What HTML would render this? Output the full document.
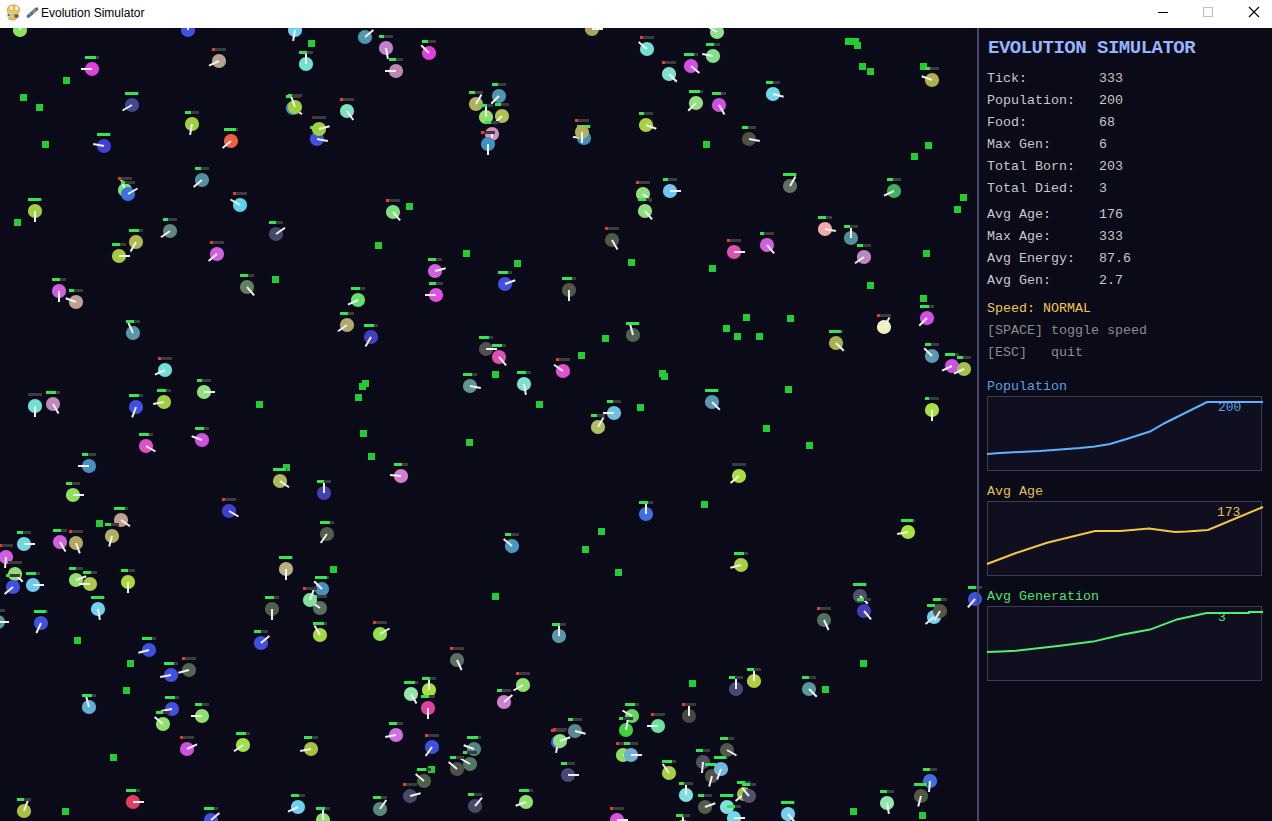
<!DOCTYPE html>
<html><head><meta charset="utf-8">
<style>
html,body{margin:0;padding:0;width:1272px;height:821px;overflow:hidden;background:#0a0a18;}
#tb{position:absolute;left:0;top:0;width:1272px;height:28px;background:#fff;}
#tb .t{position:absolute;left:41px;top:6px;font:12px "Liberation Sans",sans-serif;color:#000;}
#cv{position:absolute;left:0;top:0;}
.p{position:absolute;font-family:"Liberation Mono",monospace;white-space:pre;}
</style></head><body>
<svg id="cv" width="1272" height="821" shape-rendering="crispEdges">
<rect x="0" y="0" width="1272" height="821" fill="#0a0a18"/>
<rect x="63" y="77" width="7" height="7" fill="#22cc33"/><rect x="20" y="94" width="7" height="7" fill="#22cc33"/><rect x="36" y="104" width="7" height="7" fill="#22cc33"/><rect x="42" y="141" width="7" height="7" fill="#22cc33"/><rect x="14" y="219" width="7" height="7" fill="#22cc33"/><rect x="308" y="40" width="7" height="7" fill="#22cc33"/><rect x="406" y="203" width="7" height="7" fill="#22cc33"/><rect x="703" y="141" width="7" height="7" fill="#22cc33"/><rect x="845" y="38" width="7" height="7" fill="#22cc33"/><rect x="852" y="38" width="7" height="7" fill="#22cc33"/><rect x="854" y="42" width="7" height="7" fill="#22cc33"/><rect x="859" y="63" width="7" height="7" fill="#22cc33"/><rect x="867" y="68" width="7" height="7" fill="#22cc33"/><rect x="920" y="63" width="7" height="7" fill="#22cc33"/><rect x="925" y="142" width="7" height="7" fill="#22cc33"/><rect x="911" y="153" width="7" height="7" fill="#22cc33"/><rect x="960" y="194" width="7" height="7" fill="#22cc33"/><rect x="954" y="206" width="7" height="7" fill="#22cc33"/><rect x="375" y="242" width="7" height="7" fill="#22cc33"/><rect x="463" y="250" width="7" height="7" fill="#22cc33"/><rect x="272" y="276" width="7" height="7" fill="#22cc33"/><rect x="362" y="380" width="7" height="7" fill="#22cc33"/><rect x="359" y="383" width="7" height="7" fill="#22cc33"/><rect x="355" y="394" width="7" height="7" fill="#22cc33"/><rect x="256" y="401" width="7" height="7" fill="#22cc33"/><rect x="514" y="260" width="7" height="7" fill="#22cc33"/><rect x="628" y="259" width="7" height="7" fill="#22cc33"/><rect x="709" y="265" width="7" height="7" fill="#22cc33"/><rect x="602" y="335" width="7" height="7" fill="#22cc33"/><rect x="723" y="325" width="7" height="7" fill="#22cc33"/><rect x="578" y="352" width="7" height="7" fill="#22cc33"/><rect x="492" y="371" width="7" height="7" fill="#22cc33"/><rect x="659" y="370" width="7" height="7" fill="#22cc33"/><rect x="661" y="373" width="7" height="7" fill="#22cc33"/><rect x="536" y="401" width="7" height="7" fill="#22cc33"/><rect x="637" y="404" width="7" height="7" fill="#22cc33"/><rect x="923" y="250" width="7" height="7" fill="#22cc33"/><rect x="867" y="282" width="7" height="7" fill="#22cc33"/><rect x="920" y="295" width="7" height="7" fill="#22cc33"/><rect x="743" y="314" width="7" height="7" fill="#22cc33"/><rect x="787" y="315" width="7" height="7" fill="#22cc33"/><rect x="734" y="333" width="7" height="7" fill="#22cc33"/><rect x="756" y="333" width="7" height="7" fill="#22cc33"/><rect x="785" y="386" width="7" height="7" fill="#22cc33"/><rect x="763" y="425" width="7" height="7" fill="#22cc33"/><rect x="96" y="520" width="7" height="7" fill="#22cc33"/><rect x="360" y="430" width="7" height="7" fill="#22cc33"/><rect x="466" y="439" width="7" height="7" fill="#22cc33"/><rect x="368" y="453" width="7" height="7" fill="#22cc33"/><rect x="283" y="464" width="7" height="7" fill="#22cc33"/><rect x="330" y="566" width="7" height="7" fill="#22cc33"/><rect x="701" y="501" width="7" height="7" fill="#22cc33"/><rect x="598" y="528" width="7" height="7" fill="#22cc33"/><rect x="582" y="546" width="7" height="7" fill="#22cc33"/><rect x="615" y="569" width="7" height="7" fill="#22cc33"/><rect x="492" y="593" width="7" height="7" fill="#22cc33"/><rect x="806" y="442" width="7" height="7" fill="#22cc33"/><rect x="74" y="637" width="7" height="7" fill="#22cc33"/><rect x="127" y="660" width="7" height="7" fill="#22cc33"/><rect x="123" y="687" width="7" height="7" fill="#22cc33"/><rect x="110" y="754" width="7" height="7" fill="#22cc33"/><rect x="62" y="808" width="7" height="7" fill="#22cc33"/><rect x="428" y="766" width="7" height="7" fill="#22cc33"/><rect x="689" y="680" width="7" height="7" fill="#22cc33"/><rect x="822" y="686" width="7" height="7" fill="#22cc33"/><rect x="860" y="660" width="7" height="7" fill="#22cc33"/><rect x="850" y="808" width="7" height="7" fill="#22cc33"/><rect x="919" y="812" width="7" height="7" fill="#22cc33"/>
<g shape-rendering="auto">
<circle cx="20" cy="30" r="7.1" fill="#90e060"/><line x1="20" y1="30" x2="20.0" y2="19.0" stroke="#f0f0f0" stroke-width="2"/><rect x="13" y="17" width="14" height="3" fill="#3c3c3c"/><rect x="13" y="17" width="13" height="3" fill="#32e650"/>
<circle cx="188" cy="30" r="7.1" fill="#4050e0"/><line x1="188" y1="30" x2="188.0" y2="19.0" stroke="#f0f0f0" stroke-width="2"/><rect x="181" y="17" width="14" height="3" fill="#3c3c3c"/><rect x="181" y="17" width="13" height="3" fill="#32e650"/>
<circle cx="219" cy="61" r="7.1" fill="#b8a090"/><line x1="219" y1="61" x2="209.0" y2="65.6" stroke="#f0f0f0" stroke-width="2"/><rect x="212" y="48" width="14" height="3" fill="#3c3c3c"/><rect x="212" y="48" width="3" height="3" fill="#e63c28"/>
<circle cx="92" cy="69" r="7.1" fill="#e040e0"/><line x1="92" y1="69" x2="81.0" y2="69.0" stroke="#f0f0f0" stroke-width="2"/><rect x="85" y="56" width="14" height="3" fill="#3c3c3c"/><rect x="85" y="56" width="11" height="3" fill="#32e650"/>
<circle cx="132" cy="105" r="7.1" fill="#404890"/><line x1="132" y1="105" x2="122.5" y2="110.5" stroke="#f0f0f0" stroke-width="2"/><rect x="125" y="92" width="14" height="3" fill="#3c3c3c"/><rect x="125" y="92" width="13" height="3" fill="#32e650"/>
<circle cx="192" cy="124" r="7.1" fill="#a0d040"/><line x1="192" y1="124" x2="190.1" y2="134.8" stroke="#f0f0f0" stroke-width="2"/><rect x="185" y="111" width="14" height="3" fill="#3c3c3c"/><rect x="185" y="111" width="6" height="3" fill="#32e650"/>
<circle cx="231" cy="141" r="7.1" fill="#f06040"/><line x1="231" y1="141" x2="222.6" y2="148.1" stroke="#f0f0f0" stroke-width="2"/><rect x="224" y="128" width="14" height="3" fill="#3c3c3c"/><rect x="224" y="128" width="12" height="3" fill="#32e650"/>
<circle cx="104" cy="146" r="7.1" fill="#4040d0"/><line x1="104" y1="146" x2="93.2" y2="144.1" stroke="#f0f0f0" stroke-width="2"/><rect x="97" y="133" width="14" height="3" fill="#3c3c3c"/><rect x="97" y="133" width="13" height="3" fill="#32e650"/>
<circle cx="202" cy="180" r="7.1" fill="#5090a0"/><line x1="202" y1="180" x2="193.6" y2="187.1" stroke="#f0f0f0" stroke-width="2"/><rect x="195" y="167" width="14" height="3" fill="#3c3c3c"/><rect x="195" y="167" width="6" height="3" fill="#32e650"/>
<circle cx="125" cy="190" r="7.1" fill="#80e070"/><line x1="125" y1="190" x2="121.2" y2="179.7" stroke="#f0f0f0" stroke-width="2"/><rect x="118" y="177" width="14" height="3" fill="#3c3c3c"/><rect x="118" y="177" width="3" height="3" fill="#e63c28"/>
<circle cx="128" cy="194" r="7.1" fill="#4070e0"/><line x1="128" y1="194" x2="137.5" y2="188.5" stroke="#f0f0f0" stroke-width="2"/><rect x="121" y="181" width="14" height="3" fill="#3c3c3c"/><rect x="121" y="181" width="4" height="3" fill="#32e650"/>
<circle cx="240" cy="205" r="7.1" fill="#60d0f0"/><line x1="240" y1="205" x2="230.5" y2="199.5" stroke="#f0f0f0" stroke-width="2"/><rect x="233" y="192" width="14" height="3" fill="#3c3c3c"/><rect x="233" y="192" width="3" height="3" fill="#e63c28"/>
<circle cx="35" cy="211" r="7.1" fill="#a0d040"/><line x1="35" y1="211" x2="35.0" y2="222.0" stroke="#f0f0f0" stroke-width="2"/><rect x="28" y="198" width="14" height="3" fill="#3c3c3c"/><rect x="28" y="198" width="13" height="3" fill="#32e650"/>
<circle cx="170" cy="231" r="7.1" fill="#608880"/><line x1="170" y1="231" x2="161.0" y2="237.3" stroke="#f0f0f0" stroke-width="2"/><rect x="163" y="218" width="14" height="3" fill="#3c3c3c"/><rect x="163" y="218" width="5" height="3" fill="#32e650"/>
<circle cx="295" cy="30" r="7.1" fill="#70d0f0"/><line x1="295" y1="30" x2="293.1" y2="40.8" stroke="#f0f0f0" stroke-width="2"/><rect x="288" y="17" width="14" height="3" fill="#3c3c3c"/><rect x="288" y="17" width="13" height="3" fill="#32e650"/>
<circle cx="306" cy="64" r="7.1" fill="#70e0d0"/><line x1="306" y1="64" x2="306.0" y2="53.0" stroke="#f0f0f0" stroke-width="2"/><rect x="299" y="51" width="14" height="3" fill="#3c3c3c"/><rect x="299" y="51" width="8" height="3" fill="#32e650"/>
<circle cx="365" cy="37" r="7.1" fill="#5098b0"/><line x1="365" y1="37" x2="373.4" y2="29.9" stroke="#f0f0f0" stroke-width="2"/><rect x="358" y="24" width="14" height="3" fill="#3c3c3c"/><rect x="358" y="24" width="7" height="3" fill="#32e650"/>
<circle cx="386" cy="48" r="7.1" fill="#c080d0"/><line x1="386" y1="48" x2="387.9" y2="58.8" stroke="#f0f0f0" stroke-width="2"/><rect x="379" y="35" width="14" height="3" fill="#3c3c3c"/><rect x="379" y="35" width="5" height="3" fill="#32e650"/>
<circle cx="429" cy="53" r="7.1" fill="#e040e0"/><line x1="429" y1="53" x2="421.2" y2="45.2" stroke="#f0f0f0" stroke-width="2"/><rect x="422" y="40" width="14" height="3" fill="#3c3c3c"/><rect x="422" y="40" width="6" height="3" fill="#32e650"/>
<circle cx="396" cy="71" r="7.1" fill="#c088b0"/><line x1="396" y1="71" x2="385.0" y2="71.0" stroke="#f0f0f0" stroke-width="2"/><rect x="389" y="58" width="14" height="3" fill="#3c3c3c"/><rect x="389" y="58" width="7" height="3" fill="#32e650"/>
<circle cx="293" cy="108" r="7.1" fill="#4090d0"/><line x1="293" y1="108" x2="302.0" y2="114.3" stroke="#f0f0f0" stroke-width="2"/><rect x="286" y="95" width="14" height="3" fill="#3c3c3c"/><rect x="286" y="95" width="5" height="3" fill="#32e650"/>
<circle cx="295" cy="107" r="7.1" fill="#a0d040"/><line x1="295" y1="107" x2="291.2" y2="96.7" stroke="#f0f0f0" stroke-width="2"/><rect x="288" y="94" width="14" height="3" fill="#3c3c3c"/><rect x="288" y="94" width="4" height="3" fill="#32e650"/>
<circle cx="347" cy="111" r="7.1" fill="#80e0c0"/><line x1="347" y1="111" x2="353.3" y2="120.0" stroke="#f0f0f0" stroke-width="2"/><rect x="340" y="98" width="14" height="3" fill="#3c3c3c"/><rect x="340" y="98" width="3" height="3" fill="#e63c28"/>
<circle cx="317" cy="139" r="7.1" fill="#4050e0"/><line x1="317" y1="139" x2="327.8" y2="140.9" stroke="#f0f0f0" stroke-width="2"/><rect x="310" y="126" width="14" height="3" fill="#3c3c3c"/><rect x="310" y="126" width="3" height="3" fill="#32e650"/>
<circle cx="319" cy="129" r="7.1" fill="#a0d040"/><line x1="319" y1="129" x2="329.6" y2="126.2" stroke="#f0f0f0" stroke-width="2"/><rect x="312" y="116" width="14" height="3" fill="#3c3c3c"/>
<circle cx="476" cy="104" r="7.1" fill="#b0b060"/><line x1="476" y1="104" x2="481.5" y2="94.5" stroke="#f0f0f0" stroke-width="2"/><rect x="469" y="91" width="14" height="3" fill="#3c3c3c"/><rect x="469" y="91" width="6" height="3" fill="#32e650"/>
<circle cx="393" cy="212" r="7.1" fill="#80e080"/><line x1="393" y1="212" x2="400.1" y2="220.4" stroke="#f0f0f0" stroke-width="2"/><rect x="386" y="199" width="14" height="3" fill="#3c3c3c"/><rect x="386" y="199" width="3" height="3" fill="#e63c28"/>
<circle cx="592" cy="29" r="7.1" fill="#b0a060"/><line x1="592" y1="29" x2="603.0" y2="29.0" stroke="#f0f0f0" stroke-width="2"/><rect x="585" y="16" width="14" height="3" fill="#3c3c3c"/><rect x="585" y="16" width="13" height="3" fill="#32e650"/>
<circle cx="647" cy="49" r="7.1" fill="#70e0d0"/><line x1="647" y1="49" x2="638.6" y2="41.9" stroke="#f0f0f0" stroke-width="2"/><rect x="640" y="36" width="14" height="3" fill="#3c3c3c"/><rect x="640" y="36" width="3" height="3" fill="#e63c28"/>
<circle cx="717" cy="32" r="7.1" fill="#90e090"/><line x1="717" y1="32" x2="707.5" y2="26.5" stroke="#f0f0f0" stroke-width="2"/><rect x="710" y="19" width="14" height="3" fill="#3c3c3c"/><rect x="710" y="19" width="13" height="3" fill="#32e650"/>
<circle cx="713" cy="56" r="7.1" fill="#80e090"/><line x1="713" y1="56" x2="702.2" y2="54.1" stroke="#f0f0f0" stroke-width="2"/><rect x="706" y="43" width="14" height="3" fill="#3c3c3c"/><rect x="706" y="43" width="8" height="3" fill="#32e650"/>
<circle cx="691" cy="66" r="7.1" fill="#d050e0"/><line x1="691" y1="66" x2="699.4" y2="73.1" stroke="#f0f0f0" stroke-width="2"/><rect x="684" y="53" width="14" height="3" fill="#3c3c3c"/><rect x="684" y="53" width="10" height="3" fill="#32e650"/>
<circle cx="669" cy="74" r="7.1" fill="#80e0d0"/><line x1="669" y1="74" x2="676.8" y2="81.8" stroke="#f0f0f0" stroke-width="2"/><rect x="662" y="61" width="14" height="3" fill="#3c3c3c"/><rect x="662" y="61" width="3" height="3" fill="#e63c28"/>
<circle cx="696" cy="103" r="7.1" fill="#90e080"/><line x1="696" y1="103" x2="688.2" y2="110.8" stroke="#f0f0f0" stroke-width="2"/><rect x="689" y="90" width="14" height="3" fill="#3c3c3c"/><rect x="689" y="90" width="11" height="3" fill="#32e650"/>
<circle cx="719" cy="105" r="7.1" fill="#d050e0"/><line x1="719" y1="105" x2="724.5" y2="114.5" stroke="#f0f0f0" stroke-width="2"/><rect x="712" y="92" width="14" height="3" fill="#3c3c3c"/><rect x="712" y="92" width="9" height="3" fill="#32e650"/>
<circle cx="646" cy="125" r="7.1" fill="#a8d040"/><line x1="646" y1="125" x2="656.3" y2="128.8" stroke="#f0f0f0" stroke-width="2"/><rect x="639" y="112" width="14" height="3" fill="#3c3c3c"/><rect x="639" y="112" width="5" height="3" fill="#32e650"/>
<circle cx="499" cy="96" r="7.1" fill="#5098b0"/><line x1="499" y1="96" x2="491.2" y2="103.8" stroke="#f0f0f0" stroke-width="2"/><rect x="492" y="83" width="14" height="3" fill="#3c3c3c"/><rect x="492" y="83" width="6" height="3" fill="#32e650"/>
<circle cx="486" cy="117" r="7.1" fill="#90e070"/><line x1="486" y1="117" x2="486.0" y2="106.0" stroke="#f0f0f0" stroke-width="2"/><rect x="479" y="104" width="14" height="3" fill="#3c3c3c"/><rect x="479" y="104" width="8" height="3" fill="#32e650"/>
<circle cx="502" cy="116" r="7.1" fill="#b0c050"/><line x1="502" y1="116" x2="494.2" y2="123.8" stroke="#f0f0f0" stroke-width="2"/><rect x="495" y="103" width="14" height="3" fill="#3c3c3c"/><rect x="495" y="103" width="6" height="3" fill="#32e650"/>
<circle cx="492" cy="134" r="7.1" fill="#d090c0"/><line x1="492" y1="134" x2="492.0" y2="145.0" stroke="#f0f0f0" stroke-width="2"/><rect x="485" y="121" width="14" height="3" fill="#3c3c3c"/><rect x="485" y="121" width="6" height="3" fill="#32e650"/>
<circle cx="488" cy="144" r="7.1" fill="#4090c0"/><line x1="488" y1="144" x2="488.0" y2="155.0" stroke="#f0f0f0" stroke-width="2"/><rect x="481" y="131" width="14" height="3" fill="#3c3c3c"/><rect x="481" y="131" width="3" height="3" fill="#e63c28"/>
<circle cx="584" cy="138" r="7.1" fill="#4090c0"/><line x1="584" y1="138" x2="573.0" y2="137.0" stroke="#f0f0f0" stroke-width="2"/><rect x="577" y="125" width="14" height="3" fill="#3c3c3c"/><rect x="577" y="125" width="13" height="3" fill="#32e650"/>
<circle cx="582" cy="132" r="7.1" fill="#b0b060"/><line x1="582" y1="132" x2="582.0" y2="143.0" stroke="#f0f0f0" stroke-width="2"/><rect x="575" y="119" width="14" height="3" fill="#3c3c3c"/><rect x="575" y="119" width="3" height="3" fill="#e63c28"/>
<circle cx="643" cy="194" r="7.1" fill="#90e080"/><line x1="643" y1="194" x2="651.4" y2="201.1" stroke="#f0f0f0" stroke-width="2"/><rect x="636" y="181" width="14" height="3" fill="#3c3c3c"/><rect x="636" y="181" width="3" height="3" fill="#e63c28"/>
<circle cx="670" cy="191" r="7.1" fill="#70c8f0"/><line x1="670" y1="191" x2="681.0" y2="191.0" stroke="#f0f0f0" stroke-width="2"/><rect x="663" y="178" width="14" height="3" fill="#3c3c3c"/><rect x="663" y="178" width="5" height="3" fill="#32e650"/>
<circle cx="645" cy="211" r="7.1" fill="#90e080"/><line x1="645" y1="211" x2="652.1" y2="219.4" stroke="#f0f0f0" stroke-width="2"/><rect x="638" y="198" width="14" height="3" fill="#3c3c3c"/><rect x="638" y="198" width="8" height="3" fill="#32e650"/>
<circle cx="932" cy="80" r="7.1" fill="#b0b050"/><line x1="932" y1="80" x2="921.7" y2="76.2" stroke="#f0f0f0" stroke-width="2"/><rect x="925" y="67" width="14" height="3" fill="#3c3c3c"/><rect x="925" y="67" width="5" height="3" fill="#32e650"/>
<circle cx="773" cy="94" r="7.1" fill="#70d8e8"/><line x1="773" y1="94" x2="783.6" y2="96.8" stroke="#f0f0f0" stroke-width="2"/><rect x="766" y="81" width="14" height="3" fill="#3c3c3c"/><rect x="766" y="81" width="7" height="3" fill="#32e650"/>
<circle cx="749" cy="139" r="7.1" fill="#505048"/><line x1="749" y1="139" x2="759.8" y2="140.9" stroke="#f0f0f0" stroke-width="2"/><rect x="742" y="126" width="14" height="3" fill="#3c3c3c"/><rect x="742" y="126" width="6" height="3" fill="#32e650"/>
<circle cx="790" cy="186" r="7.1" fill="#607060"/><line x1="790" y1="186" x2="795.5" y2="176.5" stroke="#f0f0f0" stroke-width="2"/><rect x="783" y="173" width="14" height="3" fill="#3c3c3c"/><rect x="783" y="173" width="13" height="3" fill="#32e650"/>
<circle cx="894" cy="191" r="7.1" fill="#40b060"/><line x1="894" y1="191" x2="884.0" y2="195.6" stroke="#f0f0f0" stroke-width="2"/><rect x="887" y="178" width="14" height="3" fill="#3c3c3c"/><rect x="887" y="178" width="6" height="3" fill="#32e650"/>
<circle cx="136" cy="242" r="7.1" fill="#b0b850"/><line x1="136" y1="242" x2="130.5" y2="251.5" stroke="#f0f0f0" stroke-width="2"/><rect x="129" y="229" width="14" height="3" fill="#3c3c3c"/><rect x="129" y="229" width="10" height="3" fill="#32e650"/>
<circle cx="119" cy="256" r="7.1" fill="#a8c840"/><line x1="119" y1="256" x2="130.0" y2="256.0" stroke="#f0f0f0" stroke-width="2"/><rect x="112" y="243" width="14" height="3" fill="#3c3c3c"/><rect x="112" y="243" width="8" height="3" fill="#32e650"/>
<circle cx="217" cy="254" r="7.1" fill="#d060e0"/><line x1="217" y1="254" x2="208.6" y2="261.1" stroke="#f0f0f0" stroke-width="2"/><rect x="210" y="241" width="14" height="3" fill="#3c3c3c"/><rect x="210" y="241" width="3" height="3" fill="#e63c28"/>
<circle cx="59" cy="291" r="7.1" fill="#d060e0"/><line x1="59" y1="291" x2="59.0" y2="302.0" stroke="#f0f0f0" stroke-width="2"/><rect x="52" y="278" width="14" height="3" fill="#3c3c3c"/><rect x="52" y="278" width="8" height="3" fill="#32e650"/>
<circle cx="76" cy="302" r="7.1" fill="#c0a090"/><line x1="76" y1="302" x2="65.7" y2="298.2" stroke="#f0f0f0" stroke-width="2"/><rect x="69" y="289" width="14" height="3" fill="#3c3c3c"/><rect x="69" y="289" width="5" height="3" fill="#32e650"/>
<circle cx="133" cy="333" r="7.1" fill="#5898a8"/><line x1="133" y1="333" x2="128.4" y2="323.0" stroke="#f0f0f0" stroke-width="2"/><rect x="126" y="320" width="14" height="3" fill="#3c3c3c"/><rect x="126" y="320" width="8" height="3" fill="#32e650"/>
<circle cx="165" cy="370" r="7.1" fill="#70e0d8"/><line x1="165" y1="370" x2="155.0" y2="374.6" stroke="#f0f0f0" stroke-width="2"/><rect x="158" y="357" width="14" height="3" fill="#3c3c3c"/><rect x="158" y="357" width="3" height="3" fill="#e63c28"/>
<circle cx="204" cy="392" r="7.1" fill="#90e080"/><line x1="204" y1="392" x2="215.0" y2="392.0" stroke="#f0f0f0" stroke-width="2"/><rect x="197" y="379" width="14" height="3" fill="#3c3c3c"/><rect x="197" y="379" width="5" height="3" fill="#32e650"/>
<circle cx="35" cy="406" r="7.1" fill="#70e0d8"/><line x1="35" y1="406" x2="35.0" y2="417.0" stroke="#f0f0f0" stroke-width="2"/><rect x="28" y="393" width="14" height="3" fill="#3c3c3c"/>
<circle cx="53" cy="404" r="7.1" fill="#c088b8"/><line x1="53" y1="404" x2="58.5" y2="413.5" stroke="#f0f0f0" stroke-width="2"/><rect x="46" y="391" width="14" height="3" fill="#3c3c3c"/><rect x="46" y="391" width="10" height="3" fill="#32e650"/>
<circle cx="136" cy="407" r="7.1" fill="#4050e0"/><line x1="136" y1="407" x2="132.2" y2="417.3" stroke="#f0f0f0" stroke-width="2"/><rect x="129" y="394" width="14" height="3" fill="#3c3c3c"/><rect x="129" y="394" width="10" height="3" fill="#32e650"/>
<circle cx="164" cy="402" r="7.1" fill="#a0d040"/><line x1="164" y1="402" x2="153.2" y2="403.9" stroke="#f0f0f0" stroke-width="2"/><rect x="157" y="389" width="14" height="3" fill="#3c3c3c"/><rect x="157" y="389" width="9" height="3" fill="#32e650"/>
<circle cx="276" cy="234" r="7.1" fill="#484868"/><line x1="276" y1="234" x2="285.0" y2="227.7" stroke="#f0f0f0" stroke-width="2"/><rect x="269" y="221" width="14" height="3" fill="#3c3c3c"/><rect x="269" y="221" width="7" height="3" fill="#32e650"/>
<circle cx="247" cy="287" r="7.1" fill="#608060"/><line x1="247" y1="287" x2="254.1" y2="295.4" stroke="#f0f0f0" stroke-width="2"/><rect x="240" y="274" width="14" height="3" fill="#3c3c3c"/><rect x="240" y="274" width="8" height="3" fill="#32e650"/>
<circle cx="435" cy="271" r="7.1" fill="#d060e0"/><line x1="435" y1="271" x2="445.6" y2="268.2" stroke="#f0f0f0" stroke-width="2"/><rect x="428" y="258" width="14" height="3" fill="#3c3c3c"/><rect x="428" y="258" width="8" height="3" fill="#32e650"/>
<circle cx="436" cy="295" r="7.1" fill="#e050e0"/><line x1="436" y1="295" x2="425.0" y2="295.0" stroke="#f0f0f0" stroke-width="2"/><rect x="429" y="282" width="14" height="3" fill="#3c3c3c"/><rect x="429" y="282" width="7" height="3" fill="#32e650"/>
<circle cx="358" cy="300" r="7.1" fill="#60e070"/><line x1="358" y1="300" x2="348.0" y2="304.6" stroke="#f0f0f0" stroke-width="2"/><rect x="351" y="287" width="14" height="3" fill="#3c3c3c"/><rect x="351" y="287" width="9" height="3" fill="#32e650"/>
<circle cx="347" cy="325" r="7.1" fill="#b0a870"/><line x1="347" y1="325" x2="338.0" y2="331.3" stroke="#f0f0f0" stroke-width="2"/><rect x="340" y="312" width="14" height="3" fill="#3c3c3c"/><rect x="340" y="312" width="8" height="3" fill="#32e650"/>
<circle cx="371" cy="337" r="7.1" fill="#4040c0"/><line x1="371" y1="337" x2="365.5" y2="346.5" stroke="#f0f0f0" stroke-width="2"/><rect x="364" y="324" width="14" height="3" fill="#3c3c3c"/><rect x="364" y="324" width="10" height="3" fill="#32e650"/>
<circle cx="486" cy="349" r="7.1" fill="#505050"/><line x1="486" y1="349" x2="497.0" y2="349.0" stroke="#f0f0f0" stroke-width="2"/><rect x="479" y="336" width="14" height="3" fill="#3c3c3c"/><rect x="479" y="336" width="10" height="3" fill="#32e650"/>
<circle cx="470" cy="386" r="7.1" fill="#609890"/><line x1="470" y1="386" x2="480.8" y2="387.9" stroke="#f0f0f0" stroke-width="2"/><rect x="463" y="373" width="14" height="3" fill="#3c3c3c"/><rect x="463" y="373" width="9" height="3" fill="#32e650"/>
<circle cx="612" cy="240" r="7.1" fill="#505848"/><line x1="612" y1="240" x2="617.5" y2="249.5" stroke="#f0f0f0" stroke-width="2"/><rect x="605" y="227" width="14" height="3" fill="#3c3c3c"/><rect x="605" y="227" width="3" height="3" fill="#e63c28"/>
<circle cx="505" cy="284" r="7.1" fill="#4050e0"/><line x1="505" y1="284" x2="515.3" y2="280.2" stroke="#f0f0f0" stroke-width="2"/><rect x="498" y="271" width="14" height="3" fill="#3c3c3c"/><rect x="498" y="271" width="10" height="3" fill="#32e650"/>
<circle cx="569" cy="290" r="7.1" fill="#505848"/><line x1="569" y1="290" x2="569.0" y2="301.0" stroke="#f0f0f0" stroke-width="2"/><rect x="562" y="277" width="14" height="3" fill="#3c3c3c"/><rect x="562" y="277" width="10" height="3" fill="#32e650"/>
<circle cx="633" cy="335" r="7.1" fill="#506050"/><line x1="633" y1="335" x2="630.2" y2="324.4" stroke="#f0f0f0" stroke-width="2"/><rect x="626" y="322" width="14" height="3" fill="#3c3c3c"/><rect x="626" y="322" width="13" height="3" fill="#32e650"/>
<circle cx="499" cy="357" r="7.1" fill="#e050b0"/><line x1="499" y1="357" x2="506.1" y2="365.4" stroke="#f0f0f0" stroke-width="2"/><rect x="492" y="344" width="14" height="3" fill="#3c3c3c"/><rect x="492" y="344" width="10" height="3" fill="#32e650"/>
<circle cx="563" cy="371" r="7.1" fill="#e050d0"/><line x1="563" y1="371" x2="554.0" y2="364.7" stroke="#f0f0f0" stroke-width="2"/><rect x="556" y="358" width="14" height="3" fill="#3c3c3c"/><rect x="556" y="358" width="3" height="3" fill="#e63c28"/>
<circle cx="524" cy="384" r="7.1" fill="#80e0d0"/><line x1="524" y1="384" x2="525.9" y2="394.8" stroke="#f0f0f0" stroke-width="2"/><rect x="517" y="371" width="14" height="3" fill="#3c3c3c"/><rect x="517" y="371" width="9" height="3" fill="#32e650"/>
<circle cx="614" cy="413" r="7.1" fill="#70c0e0"/><line x1="614" y1="413" x2="603.0" y2="413.0" stroke="#f0f0f0" stroke-width="2"/><rect x="607" y="400" width="14" height="3" fill="#3c3c3c"/><rect x="607" y="400" width="6" height="3" fill="#32e650"/>
<circle cx="712" cy="402" r="7.1" fill="#5898b0"/><line x1="712" y1="402" x2="719.8" y2="409.8" stroke="#f0f0f0" stroke-width="2"/><rect x="705" y="389" width="14" height="3" fill="#3c3c3c"/><rect x="705" y="389" width="13" height="3" fill="#32e650"/>
<circle cx="598" cy="427" r="7.1" fill="#b0c060"/><line x1="598" y1="427" x2="603.5" y2="417.5" stroke="#f0f0f0" stroke-width="2"/><rect x="591" y="414" width="14" height="3" fill="#3c3c3c"/><rect x="591" y="414" width="6" height="3" fill="#32e650"/>
<circle cx="734" cy="252" r="7.1" fill="#e050b0"/><line x1="734" y1="252" x2="745.0" y2="252.0" stroke="#f0f0f0" stroke-width="2"/><rect x="727" y="239" width="14" height="3" fill="#3c3c3c"/><rect x="727" y="239" width="3" height="3" fill="#e63c28"/>
<circle cx="767" cy="245" r="7.1" fill="#d060e0"/><line x1="767" y1="245" x2="774.1" y2="253.4" stroke="#f0f0f0" stroke-width="2"/><rect x="760" y="232" width="14" height="3" fill="#3c3c3c"/><rect x="760" y="232" width="4" height="3" fill="#32e650"/>
<circle cx="825" cy="229" r="7.1" fill="#f0a8a8"/><line x1="825" y1="229" x2="835.8" y2="230.9" stroke="#f0f0f0" stroke-width="2"/><rect x="818" y="216" width="14" height="3" fill="#3c3c3c"/><rect x="818" y="216" width="8" height="3" fill="#32e650"/>
<circle cx="851" cy="238" r="7.1" fill="#509098"/><line x1="851" y1="238" x2="851.0" y2="227.0" stroke="#f0f0f0" stroke-width="2"/><rect x="844" y="225" width="14" height="3" fill="#3c3c3c"/><rect x="844" y="225" width="6" height="3" fill="#32e650"/>
<circle cx="864" cy="257" r="7.1" fill="#c088c0"/><line x1="864" y1="257" x2="855.0" y2="263.3" stroke="#f0f0f0" stroke-width="2"/><rect x="857" y="244" width="14" height="3" fill="#3c3c3c"/><rect x="857" y="244" width="6" height="3" fill="#32e650"/>
<circle cx="927" cy="318" r="7.1" fill="#d050e0"/><line x1="927" y1="318" x2="919.2" y2="325.8" stroke="#f0f0f0" stroke-width="2"/><rect x="920" y="305" width="14" height="3" fill="#3c3c3c"/><rect x="920" y="305" width="9" height="3" fill="#32e650"/>
<circle cx="884" cy="327" r="7.1" fill="#f0f0c0"/><line x1="884" y1="327" x2="889.5" y2="317.5" stroke="#f0f0f0" stroke-width="2"/><rect x="877" y="314" width="14" height="3" fill="#3c3c3c"/><rect x="877" y="314" width="3" height="3" fill="#e63c28"/>
<circle cx="836" cy="343" r="7.1" fill="#a8b050"/><line x1="836" y1="343" x2="843.8" y2="350.8" stroke="#f0f0f0" stroke-width="2"/><rect x="829" y="330" width="14" height="3" fill="#3c3c3c"/><rect x="829" y="330" width="12" height="3" fill="#32e650"/>
<circle cx="932" cy="356" r="7.1" fill="#5898b0"/><line x1="932" y1="356" x2="924.2" y2="348.2" stroke="#f0f0f0" stroke-width="2"/><rect x="925" y="343" width="14" height="3" fill="#3c3c3c"/><rect x="925" y="343" width="6" height="3" fill="#32e650"/>
<circle cx="952" cy="366" r="7.1" fill="#d050e0"/><line x1="952" y1="366" x2="942.0" y2="370.6" stroke="#f0f0f0" stroke-width="2"/><rect x="945" y="353" width="14" height="3" fill="#3c3c3c"/><rect x="945" y="353" width="10" height="3" fill="#32e650"/>
<circle cx="964" cy="369" r="7.1" fill="#a8c050"/><line x1="964" y1="369" x2="954.0" y2="373.6" stroke="#f0f0f0" stroke-width="2"/><rect x="957" y="356" width="14" height="3" fill="#3c3c3c"/><rect x="957" y="356" width="6" height="3" fill="#32e650"/>
<circle cx="932" cy="410" r="7.1" fill="#a8e040"/><line x1="932" y1="410" x2="932.0" y2="421.0" stroke="#f0f0f0" stroke-width="2"/><rect x="925" y="397" width="14" height="3" fill="#3c3c3c"/><rect x="925" y="397" width="4" height="3" fill="#32e650"/>
<circle cx="146" cy="446" r="7.1" fill="#e050c0"/><line x1="146" y1="446" x2="155.5" y2="451.5" stroke="#f0f0f0" stroke-width="2"/><rect x="139" y="433" width="14" height="3" fill="#3c3c3c"/><rect x="139" y="433" width="10" height="3" fill="#32e650"/>
<circle cx="202" cy="440" r="7.1" fill="#d050e0"/><line x1="202" y1="440" x2="191.7" y2="436.2" stroke="#f0f0f0" stroke-width="2"/><rect x="195" y="427" width="14" height="3" fill="#3c3c3c"/><rect x="195" y="427" width="9" height="3" fill="#32e650"/>
<circle cx="89" cy="466" r="7.1" fill="#4890c0"/><line x1="89" y1="466" x2="78.0" y2="466.0" stroke="#f0f0f0" stroke-width="2"/><rect x="82" y="453" width="14" height="3" fill="#3c3c3c"/><rect x="82" y="453" width="6" height="3" fill="#32e650"/>
<circle cx="73" cy="495" r="7.1" fill="#90e060"/><line x1="73" y1="495" x2="84.0" y2="495.0" stroke="#f0f0f0" stroke-width="2"/><rect x="66" y="482" width="14" height="3" fill="#3c3c3c"/><rect x="66" y="482" width="6" height="3" fill="#32e650"/>
<circle cx="121" cy="520" r="7.1" fill="#c0a090"/><line x1="121" y1="520" x2="130.0" y2="526.3" stroke="#f0f0f0" stroke-width="2"/><rect x="114" y="507" width="14" height="3" fill="#3c3c3c"/><rect x="114" y="507" width="11" height="3" fill="#32e650"/>
<circle cx="112" cy="536" r="7.1" fill="#b0b060"/><line x1="112" y1="536" x2="109.2" y2="546.6" stroke="#f0f0f0" stroke-width="2"/><rect x="105" y="523" width="14" height="3" fill="#3c3c3c"/><rect x="105" y="523" width="6" height="3" fill="#32e650"/>
<circle cx="229" cy="511" r="7.1" fill="#4040d0"/><line x1="229" y1="511" x2="238.5" y2="516.5" stroke="#f0f0f0" stroke-width="2"/><rect x="222" y="498" width="14" height="3" fill="#3c3c3c"/><rect x="222" y="498" width="3" height="3" fill="#e63c28"/>
<circle cx="24" cy="544" r="7.1" fill="#70d8e0"/><line x1="24" y1="544" x2="35.0" y2="544.0" stroke="#f0f0f0" stroke-width="2"/><rect x="17" y="531" width="14" height="3" fill="#3c3c3c"/><rect x="17" y="531" width="6" height="3" fill="#32e650"/>
<circle cx="60" cy="542" r="7.1" fill="#d060e0"/><line x1="60" y1="542" x2="65.5" y2="551.5" stroke="#f0f0f0" stroke-width="2"/><rect x="53" y="529" width="14" height="3" fill="#3c3c3c"/><rect x="53" y="529" width="8" height="3" fill="#32e650"/>
<circle cx="76" cy="543" r="7.1" fill="#b0a860"/><line x1="76" y1="543" x2="79.8" y2="553.3" stroke="#f0f0f0" stroke-width="2"/><rect x="69" y="530" width="14" height="3" fill="#3c3c3c"/><rect x="69" y="530" width="3" height="3" fill="#e63c28"/>
<circle cx="6" cy="557" r="7.1" fill="#d060e0"/><line x1="6" y1="557" x2="5.0" y2="568.0" stroke="#f0f0f0" stroke-width="2"/><rect x="-1" y="544" width="14" height="3" fill="#3c3c3c"/><rect x="-1" y="544" width="3" height="3" fill="#e63c28"/>
<circle cx="15" cy="574" r="7.1" fill="#90e070"/><line x1="15" y1="574" x2="22.8" y2="581.8" stroke="#f0f0f0" stroke-width="2"/><rect x="8" y="561" width="14" height="3" fill="#3c3c3c"/>
<circle cx="13" cy="587" r="7.1" fill="#4050e0"/><line x1="13" y1="587" x2="4.6" y2="594.1" stroke="#f0f0f0" stroke-width="2"/><rect x="6" y="574" width="14" height="3" fill="#3c3c3c"/><rect x="6" y="574" width="4" height="3" fill="#32e650"/>
<circle cx="33" cy="585" r="7.1" fill="#70c8f0"/><line x1="33" y1="585" x2="44.0" y2="585.0" stroke="#f0f0f0" stroke-width="2"/><rect x="26" y="572" width="14" height="3" fill="#3c3c3c"/><rect x="26" y="572" width="10" height="3" fill="#32e650"/>
<circle cx="76" cy="580" r="7.1" fill="#90e070"/><line x1="76" y1="580" x2="86.3" y2="576.2" stroke="#f0f0f0" stroke-width="2"/><rect x="69" y="567" width="14" height="3" fill="#3c3c3c"/><rect x="69" y="567" width="7" height="3" fill="#32e650"/>
<circle cx="90" cy="584" r="7.1" fill="#a8c850"/><line x1="90" y1="584" x2="79.0" y2="584.0" stroke="#f0f0f0" stroke-width="2"/><rect x="83" y="571" width="14" height="3" fill="#3c3c3c"/><rect x="83" y="571" width="8" height="3" fill="#32e650"/>
<circle cx="128" cy="582" r="7.1" fill="#a8d840"/><line x1="128" y1="582" x2="128.0" y2="593.0" stroke="#f0f0f0" stroke-width="2"/><rect x="121" y="569" width="14" height="3" fill="#3c3c3c"/><rect x="121" y="569" width="7" height="3" fill="#32e650"/>
<circle cx="98" cy="609" r="7.1" fill="#70d0f0"/><line x1="98" y1="609" x2="99.9" y2="619.8" stroke="#f0f0f0" stroke-width="2"/><rect x="91" y="596" width="14" height="3" fill="#3c3c3c"/><rect x="91" y="596" width="13" height="3" fill="#32e650"/>
<circle cx="-2" cy="622" r="7.1" fill="#5898a0"/><line x1="-2" y1="622" x2="9.0" y2="622.0" stroke="#f0f0f0" stroke-width="2"/><rect x="-9" y="609" width="14" height="3" fill="#3c3c3c"/><rect x="-9" y="609" width="7" height="3" fill="#32e650"/>
<circle cx="41" cy="623" r="7.1" fill="#4050e0"/><line x1="41" y1="623" x2="36.4" y2="633.0" stroke="#f0f0f0" stroke-width="2"/><rect x="34" y="610" width="14" height="3" fill="#3c3c3c"/><rect x="34" y="610" width="12" height="3" fill="#32e650"/>
<circle cx="401" cy="476" r="7.1" fill="#d080d0"/><line x1="401" y1="476" x2="390.0" y2="475.0" stroke="#f0f0f0" stroke-width="2"/><rect x="394" y="463" width="14" height="3" fill="#3c3c3c"/><rect x="394" y="463" width="8" height="3" fill="#32e650"/>
<circle cx="280" cy="481" r="7.1" fill="#b0b860"/><line x1="280" y1="481" x2="289.0" y2="487.3" stroke="#f0f0f0" stroke-width="2"/><rect x="273" y="468" width="14" height="3" fill="#3c3c3c"/><rect x="273" y="468" width="13" height="3" fill="#32e650"/>
<circle cx="324" cy="493" r="7.1" fill="#4040b0"/><line x1="324" y1="493" x2="324.0" y2="482.0" stroke="#f0f0f0" stroke-width="2"/><rect x="317" y="480" width="14" height="3" fill="#3c3c3c"/><rect x="317" y="480" width="7" height="3" fill="#32e650"/>
<circle cx="327" cy="534" r="7.1" fill="#506048"/><line x1="327" y1="534" x2="320.7" y2="543.0" stroke="#f0f0f0" stroke-width="2"/><rect x="320" y="521" width="14" height="3" fill="#3c3c3c"/><rect x="320" y="521" width="10" height="3" fill="#32e650"/>
<circle cx="286" cy="569" r="7.1" fill="#b8b080"/><line x1="286" y1="569" x2="286.0" y2="580.0" stroke="#f0f0f0" stroke-width="2"/><rect x="279" y="556" width="14" height="3" fill="#3c3c3c"/><rect x="279" y="556" width="13" height="3" fill="#32e650"/>
<circle cx="322" cy="589" r="7.1" fill="#4890c0"/><line x1="322" y1="589" x2="314.2" y2="581.2" stroke="#f0f0f0" stroke-width="2"/><rect x="315" y="576" width="14" height="3" fill="#3c3c3c"/><rect x="315" y="576" width="12" height="3" fill="#32e650"/>
<circle cx="320" cy="608" r="7.1" fill="#587060"/><line x1="320" y1="608" x2="311.0" y2="601.7" stroke="#f0f0f0" stroke-width="2"/><rect x="313" y="595" width="14" height="3" fill="#3c3c3c"/><rect x="313" y="595" width="4" height="3" fill="#32e650"/>
<circle cx="310" cy="600" r="7.1" fill="#80e0a0"/><line x1="310" y1="600" x2="313.8" y2="589.7" stroke="#f0f0f0" stroke-width="2"/><rect x="303" y="587" width="14" height="3" fill="#3c3c3c"/><rect x="303" y="587" width="3" height="3" fill="#e63c28"/>
<circle cx="272" cy="609" r="7.1" fill="#506048"/><line x1="272" y1="609" x2="272.0" y2="620.0" stroke="#f0f0f0" stroke-width="2"/><rect x="265" y="596" width="14" height="3" fill="#3c3c3c"/><rect x="265" y="596" width="9" height="3" fill="#32e650"/>
<circle cx="646" cy="514" r="7.1" fill="#4070e0"/><line x1="646" y1="514" x2="646.0" y2="503.0" stroke="#f0f0f0" stroke-width="2"/><rect x="639" y="501" width="14" height="3" fill="#3c3c3c"/><rect x="639" y="501" width="9" height="3" fill="#32e650"/>
<circle cx="512" cy="546" r="7.1" fill="#4898c0"/><line x1="512" y1="546" x2="503.6" y2="538.9" stroke="#f0f0f0" stroke-width="2"/><rect x="505" y="533" width="14" height="3" fill="#3c3c3c"/><rect x="505" y="533" width="6" height="3" fill="#32e650"/>
<circle cx="739" cy="476" r="7.1" fill="#a8e040"/><line x1="739" y1="476" x2="730.6" y2="483.1" stroke="#f0f0f0" stroke-width="2"/><rect x="732" y="463" width="14" height="3" fill="#3c3c3c"/>
<circle cx="908" cy="532" r="7.1" fill="#a8e040"/><line x1="908" y1="532" x2="897.2" y2="533.9" stroke="#f0f0f0" stroke-width="2"/><rect x="901" y="519" width="14" height="3" fill="#3c3c3c"/><rect x="901" y="519" width="12" height="3" fill="#32e650"/>
<circle cx="741" cy="565" r="7.1" fill="#a8d040"/><line x1="741" y1="565" x2="730.4" y2="567.8" stroke="#f0f0f0" stroke-width="2"/><rect x="734" y="552" width="14" height="3" fill="#3c3c3c"/><rect x="734" y="552" width="10" height="3" fill="#32e650"/>
<circle cx="860" cy="596" r="7.1" fill="#505068"/><line x1="860" y1="596" x2="867.8" y2="603.8" stroke="#f0f0f0" stroke-width="2"/><rect x="853" y="583" width="14" height="3" fill="#3c3c3c"/><rect x="853" y="583" width="13" height="3" fill="#32e650"/>
<circle cx="864" cy="611" r="7.1" fill="#4040b0"/><line x1="864" y1="611" x2="871.1" y2="619.4" stroke="#f0f0f0" stroke-width="2"/><rect x="857" y="598" width="14" height="3" fill="#3c3c3c"/><rect x="857" y="598" width="7" height="3" fill="#32e650"/>
<circle cx="824" cy="620" r="7.1" fill="#507060"/><line x1="824" y1="620" x2="828.6" y2="630.0" stroke="#f0f0f0" stroke-width="2"/><rect x="817" y="607" width="14" height="3" fill="#3c3c3c"/><rect x="817" y="607" width="3" height="3" fill="#e63c28"/>
<circle cx="934" cy="617" r="7.1" fill="#70d0f0"/><line x1="934" y1="617" x2="925.6" y2="624.1" stroke="#f0f0f0" stroke-width="2"/><rect x="927" y="604" width="14" height="3" fill="#3c3c3c"/><rect x="927" y="604" width="8" height="3" fill="#32e650"/>
<circle cx="940" cy="611" r="7.1" fill="#505840"/><line x1="940" y1="611" x2="934.5" y2="620.5" stroke="#f0f0f0" stroke-width="2"/><rect x="933" y="598" width="14" height="3" fill="#3c3c3c"/><rect x="933" y="598" width="8" height="3" fill="#32e650"/>
<circle cx="975" cy="599" r="7.1" fill="#4050e0"/><line x1="975" y1="599" x2="967.9" y2="607.4" stroke="#f0f0f0" stroke-width="2"/><rect x="968" y="586" width="14" height="3" fill="#3c3c3c"/><rect x="968" y="586" width="8" height="3" fill="#32e650"/>
<circle cx="149" cy="650" r="7.1" fill="#4050e0"/><line x1="149" y1="650" x2="138.4" y2="652.8" stroke="#f0f0f0" stroke-width="2"/><rect x="142" y="637" width="14" height="3" fill="#3c3c3c"/><rect x="142" y="637" width="10" height="3" fill="#32e650"/>
<circle cx="189" cy="670" r="7.1" fill="#506850"/><line x1="189" y1="670" x2="178.4" y2="672.8" stroke="#f0f0f0" stroke-width="2"/><rect x="182" y="657" width="14" height="3" fill="#3c3c3c"/><rect x="182" y="657" width="3" height="3" fill="#e63c28"/>
<circle cx="171" cy="675" r="7.1" fill="#4050e0"/><line x1="171" y1="675" x2="160.2" y2="676.9" stroke="#f0f0f0" stroke-width="2"/><rect x="164" y="662" width="14" height="3" fill="#3c3c3c"/><rect x="164" y="662" width="10" height="3" fill="#32e650"/>
<circle cx="89" cy="707" r="7.1" fill="#60b0d8"/><line x1="89" y1="707" x2="86.2" y2="696.4" stroke="#f0f0f0" stroke-width="2"/><rect x="82" y="694" width="14" height="3" fill="#3c3c3c"/><rect x="82" y="694" width="10" height="3" fill="#32e650"/>
<circle cx="172" cy="709" r="7.1" fill="#4050e0"/><line x1="172" y1="709" x2="161.2" y2="710.9" stroke="#f0f0f0" stroke-width="2"/><rect x="165" y="696" width="14" height="3" fill="#3c3c3c"/><rect x="165" y="696" width="10" height="3" fill="#32e650"/>
<circle cx="163" cy="724" r="7.1" fill="#90e070"/><line x1="163" y1="724" x2="154.6" y2="716.9" stroke="#f0f0f0" stroke-width="2"/><rect x="156" y="711" width="14" height="3" fill="#3c3c3c"/><rect x="156" y="711" width="7" height="3" fill="#32e650"/>
<circle cx="202" cy="716" r="7.1" fill="#90e070"/><line x1="202" y1="716" x2="191.0" y2="716.0" stroke="#f0f0f0" stroke-width="2"/><rect x="195" y="703" width="14" height="3" fill="#3c3c3c"/><rect x="195" y="703" width="7" height="3" fill="#32e650"/>
<circle cx="187" cy="749" r="7.1" fill="#d050e0"/><line x1="187" y1="749" x2="197.0" y2="744.4" stroke="#f0f0f0" stroke-width="2"/><rect x="180" y="736" width="14" height="3" fill="#3c3c3c"/><rect x="180" y="736" width="3" height="3" fill="#e63c28"/>
<circle cx="243" cy="745" r="7.1" fill="#a0e050"/><line x1="243" y1="745" x2="234.0" y2="751.3" stroke="#f0f0f0" stroke-width="2"/><rect x="236" y="732" width="14" height="3" fill="#3c3c3c"/><rect x="236" y="732" width="10" height="3" fill="#32e650"/>
<circle cx="133" cy="802" r="7.1" fill="#e04060"/><line x1="133" y1="802" x2="144.0" y2="802.0" stroke="#f0f0f0" stroke-width="2"/><rect x="126" y="789" width="14" height="3" fill="#3c3c3c"/><rect x="126" y="789" width="10" height="3" fill="#32e650"/>
<circle cx="24" cy="811" r="7.1" fill="#a8c040"/><line x1="24" y1="811" x2="27.8" y2="800.7" stroke="#f0f0f0" stroke-width="2"/><rect x="17" y="798" width="14" height="3" fill="#3c3c3c"/><rect x="17" y="798" width="7" height="3" fill="#32e650"/>
<circle cx="211" cy="820" r="7.1" fill="#4050e0"/><line x1="211" y1="820" x2="219.4" y2="812.9" stroke="#f0f0f0" stroke-width="2"/><rect x="204" y="807" width="14" height="3" fill="#3c3c3c"/><rect x="204" y="807" width="10" height="3" fill="#32e650"/>
<circle cx="261" cy="643" r="7.1" fill="#4050e0"/><line x1="261" y1="643" x2="269.4" y2="635.9" stroke="#f0f0f0" stroke-width="2"/><rect x="254" y="630" width="14" height="3" fill="#3c3c3c"/><rect x="254" y="630" width="7" height="3" fill="#32e650"/>
<circle cx="320" cy="635" r="7.1" fill="#a8d840"/><line x1="320" y1="635" x2="314.5" y2="625.5" stroke="#f0f0f0" stroke-width="2"/><rect x="313" y="622" width="14" height="3" fill="#3c3c3c"/><rect x="313" y="622" width="11" height="3" fill="#32e650"/>
<circle cx="380" cy="634" r="7.1" fill="#90e050"/><line x1="380" y1="634" x2="389.5" y2="628.5" stroke="#f0f0f0" stroke-width="2"/><rect x="373" y="621" width="14" height="3" fill="#3c3c3c"/><rect x="373" y="621" width="3" height="3" fill="#e63c28"/>
<circle cx="457" cy="660" r="7.1" fill="#587060"/><line x1="457" y1="660" x2="461.6" y2="670.0" stroke="#f0f0f0" stroke-width="2"/><rect x="450" y="647" width="14" height="3" fill="#3c3c3c"/><rect x="450" y="647" width="3" height="3" fill="#e63c28"/>
<circle cx="411" cy="694" r="7.1" fill="#90e8a8"/><line x1="411" y1="694" x2="416.5" y2="703.5" stroke="#f0f0f0" stroke-width="2"/><rect x="404" y="681" width="14" height="3" fill="#3c3c3c"/><rect x="404" y="681" width="11" height="3" fill="#32e650"/>
<circle cx="429" cy="690" r="7.1" fill="#a8e040"/><line x1="429" y1="690" x2="429.0" y2="679.0" stroke="#f0f0f0" stroke-width="2"/><rect x="422" y="677" width="14" height="3" fill="#3c3c3c"/><rect x="422" y="677" width="8" height="3" fill="#32e650"/>
<circle cx="428" cy="708" r="7.1" fill="#e040a0"/><line x1="428" y1="708" x2="428.0" y2="719.0" stroke="#f0f0f0" stroke-width="2"/><rect x="421" y="695" width="14" height="3" fill="#3c3c3c"/><rect x="421" y="695" width="8" height="3" fill="#32e650"/>
<circle cx="311" cy="749" r="7.1" fill="#a8c040"/><line x1="311" y1="749" x2="300.2" y2="750.9" stroke="#f0f0f0" stroke-width="2"/><rect x="304" y="736" width="14" height="3" fill="#3c3c3c"/><rect x="304" y="736" width="8" height="3" fill="#32e650"/>
<circle cx="396" cy="735" r="7.1" fill="#d070e0"/><line x1="396" y1="735" x2="385.2" y2="736.9" stroke="#f0f0f0" stroke-width="2"/><rect x="389" y="722" width="14" height="3" fill="#3c3c3c"/><rect x="389" y="722" width="8" height="3" fill="#32e650"/>
<circle cx="432" cy="747" r="7.1" fill="#4050e0"/><line x1="432" y1="747" x2="425.7" y2="756.0" stroke="#f0f0f0" stroke-width="2"/><rect x="425" y="734" width="14" height="3" fill="#3c3c3c"/><rect x="425" y="734" width="3" height="3" fill="#e63c28"/>
<circle cx="474" cy="749" r="7.1" fill="#508880"/><line x1="474" y1="749" x2="463.7" y2="745.2" stroke="#f0f0f0" stroke-width="2"/><rect x="467" y="736" width="14" height="3" fill="#3c3c3c"/><rect x="467" y="736" width="11" height="3" fill="#32e650"/>
<circle cx="470" cy="764" r="7.1" fill="#507860"/><line x1="470" y1="764" x2="460.5" y2="758.5" stroke="#f0f0f0" stroke-width="2"/><rect x="463" y="751" width="14" height="3" fill="#3c3c3c"/><rect x="463" y="751" width="4" height="3" fill="#32e650"/>
<circle cx="457" cy="769" r="7.1" fill="#505048"/><line x1="457" y1="769" x2="448.6" y2="761.9" stroke="#f0f0f0" stroke-width="2"/><rect x="450" y="756" width="14" height="3" fill="#3c3c3c"/><rect x="450" y="756" width="6" height="3" fill="#32e650"/>
<circle cx="424" cy="781" r="7.1" fill="#506048"/><line x1="424" y1="781" x2="415.6" y2="773.9" stroke="#f0f0f0" stroke-width="2"/><rect x="417" y="768" width="14" height="3" fill="#3c3c3c"/><rect x="417" y="768" width="9" height="3" fill="#32e650"/>
<circle cx="410" cy="796" r="7.1" fill="#484868"/><line x1="410" y1="796" x2="420.6" y2="793.2" stroke="#f0f0f0" stroke-width="2"/><rect x="403" y="783" width="14" height="3" fill="#3c3c3c"/><rect x="403" y="783" width="3" height="3" fill="#e63c28"/>
<circle cx="298" cy="807" r="7.1" fill="#70d0f0"/><line x1="298" y1="807" x2="288.0" y2="811.6" stroke="#f0f0f0" stroke-width="2"/><rect x="291" y="794" width="14" height="3" fill="#3c3c3c"/><rect x="291" y="794" width="8" height="3" fill="#32e650"/>
<circle cx="380" cy="809" r="7.1" fill="#588878"/><line x1="380" y1="809" x2="386.3" y2="800.0" stroke="#f0f0f0" stroke-width="2"/><rect x="373" y="796" width="14" height="3" fill="#3c3c3c"/><rect x="373" y="796" width="8" height="3" fill="#32e650"/>
<circle cx="475" cy="806" r="7.1" fill="#484868"/><line x1="475" y1="806" x2="482.1" y2="797.6" stroke="#f0f0f0" stroke-width="2"/><rect x="468" y="793" width="14" height="3" fill="#3c3c3c"/><rect x="468" y="793" width="6" height="3" fill="#32e650"/>
<circle cx="323" cy="820" r="7.1" fill="#90e070"/><line x1="323" y1="820" x2="323.0" y2="809.0" stroke="#f0f0f0" stroke-width="2"/><rect x="316" y="807" width="14" height="3" fill="#3c3c3c"/><rect x="316" y="807" width="9" height="3" fill="#32e650"/>
<circle cx="559" cy="636" r="7.1" fill="#5898a8"/><line x1="559" y1="636" x2="559.0" y2="625.0" stroke="#f0f0f0" stroke-width="2"/><rect x="552" y="623" width="14" height="3" fill="#3c3c3c"/><rect x="552" y="623" width="8" height="3" fill="#32e650"/>
<circle cx="523" cy="685" r="7.1" fill="#90e070"/><line x1="523" y1="685" x2="513.5" y2="690.5" stroke="#f0f0f0" stroke-width="2"/><rect x="516" y="672" width="14" height="3" fill="#3c3c3c"/><rect x="516" y="672" width="3" height="3" fill="#e63c28"/>
<circle cx="504" cy="702" r="7.1" fill="#d080d0"/><line x1="504" y1="702" x2="512.4" y2="694.9" stroke="#f0f0f0" stroke-width="2"/><rect x="497" y="689" width="14" height="3" fill="#3c3c3c"/><rect x="497" y="689" width="5" height="3" fill="#32e650"/>
<circle cx="632" cy="716" r="7.1" fill="#60d860"/><line x1="632" y1="716" x2="622.5" y2="710.5" stroke="#f0f0f0" stroke-width="2"/><rect x="625" y="703" width="14" height="3" fill="#3c3c3c"/><rect x="625" y="703" width="10" height="3" fill="#32e650"/>
<circle cx="626" cy="730" r="7.1" fill="#40d040"/><line x1="626" y1="730" x2="627.9" y2="719.2" stroke="#f0f0f0" stroke-width="2"/><rect x="619" y="717" width="14" height="3" fill="#3c3c3c"/><rect x="619" y="717" width="4" height="3" fill="#32e650"/>
<circle cx="658" cy="726" r="7.1" fill="#70e0a0"/><line x1="658" y1="726" x2="647.0" y2="726.0" stroke="#f0f0f0" stroke-width="2"/><rect x="651" y="713" width="14" height="3" fill="#3c3c3c"/><rect x="651" y="713" width="3" height="3" fill="#e63c28"/>
<circle cx="689" cy="716" r="7.1" fill="#484840"/><line x1="689" y1="716" x2="689.0" y2="705.0" stroke="#f0f0f0" stroke-width="2"/><rect x="682" y="703" width="14" height="3" fill="#3c3c3c"/><rect x="682" y="703" width="3" height="3" fill="#e63c28"/>
<circle cx="575" cy="731" r="7.1" fill="#588890"/><line x1="575" y1="731" x2="585.6" y2="733.8" stroke="#f0f0f0" stroke-width="2"/><rect x="568" y="718" width="14" height="3" fill="#3c3c3c"/><rect x="568" y="718" width="5" height="3" fill="#32e650"/>
<circle cx="558" cy="742" r="7.1" fill="#4050e0"/><line x1="558" y1="742" x2="556.1" y2="752.8" stroke="#f0f0f0" stroke-width="2"/><rect x="551" y="729" width="14" height="3" fill="#3c3c3c"/><rect x="551" y="729" width="3" height="3" fill="#e63c28"/>
<circle cx="560" cy="741" r="7.1" fill="#90e080"/><line x1="560" y1="741" x2="570.3" y2="737.2" stroke="#f0f0f0" stroke-width="2"/><rect x="553" y="728" width="14" height="3" fill="#3c3c3c"/><rect x="553" y="728" width="3" height="3" fill="#e63c28"/>
<circle cx="623" cy="755" r="7.1" fill="#90e060"/><line x1="623" y1="755" x2="634.0" y2="755.0" stroke="#f0f0f0" stroke-width="2"/><rect x="616" y="742" width="14" height="3" fill="#3c3c3c"/><rect x="616" y="742" width="3" height="3" fill="#e63c28"/>
<circle cx="631" cy="755" r="7.1" fill="#70b0d0"/><line x1="631" y1="755" x2="642.0" y2="755.0" stroke="#f0f0f0" stroke-width="2"/><rect x="624" y="742" width="14" height="3" fill="#3c3c3c"/><rect x="624" y="742" width="6" height="3" fill="#32e650"/>
<circle cx="568" cy="775" r="7.1" fill="#484878"/><line x1="568" y1="775" x2="579.0" y2="775.0" stroke="#f0f0f0" stroke-width="2"/><rect x="561" y="762" width="14" height="3" fill="#3c3c3c"/><rect x="561" y="762" width="6" height="3" fill="#32e650"/>
<circle cx="669" cy="773" r="7.1" fill="#a8d040"/><line x1="669" y1="773" x2="662.7" y2="764.0" stroke="#f0f0f0" stroke-width="2"/><rect x="662" y="760" width="14" height="3" fill="#3c3c3c"/><rect x="662" y="760" width="10" height="3" fill="#32e650"/>
<circle cx="703" cy="762" r="7.1" fill="#505060"/><line x1="703" y1="762" x2="702.0" y2="773.0" stroke="#f0f0f0" stroke-width="2"/><rect x="696" y="749" width="14" height="3" fill="#3c3c3c"/><rect x="696" y="749" width="7" height="3" fill="#32e650"/>
<circle cx="727" cy="750" r="7.1" fill="#505848"/><line x1="727" y1="750" x2="736.5" y2="755.5" stroke="#f0f0f0" stroke-width="2"/><rect x="720" y="737" width="14" height="3" fill="#3c3c3c"/><rect x="720" y="737" width="8" height="3" fill="#32e650"/>
<circle cx="712" cy="776" r="7.1" fill="#505048"/><line x1="712" y1="776" x2="709.2" y2="786.6" stroke="#f0f0f0" stroke-width="2"/><rect x="705" y="763" width="14" height="3" fill="#3c3c3c"/><rect x="705" y="763" width="11" height="3" fill="#32e650"/>
<circle cx="721" cy="769" r="7.1" fill="#70b8e0"/><line x1="721" y1="769" x2="717.2" y2="779.3" stroke="#f0f0f0" stroke-width="2"/><rect x="714" y="756" width="14" height="3" fill="#3c3c3c"/><rect x="714" y="756" width="12" height="3" fill="#32e650"/>
<circle cx="686" cy="795" r="7.1" fill="#80e0e0"/><line x1="686" y1="795" x2="686.0" y2="784.0" stroke="#f0f0f0" stroke-width="2"/><rect x="679" y="782" width="14" height="3" fill="#3c3c3c"/><rect x="679" y="782" width="5" height="3" fill="#32e650"/>
<circle cx="705" cy="807" r="7.1" fill="#506048"/><line x1="705" y1="807" x2="715.3" y2="803.2" stroke="#f0f0f0" stroke-width="2"/><rect x="698" y="794" width="14" height="3" fill="#3c3c3c"/><rect x="698" y="794" width="6" height="3" fill="#32e650"/>
<circle cx="727" cy="807" r="7.1" fill="#80e0e0"/><line x1="727" y1="807" x2="738.0" y2="807.0" stroke="#f0f0f0" stroke-width="2"/><rect x="720" y="794" width="14" height="3" fill="#3c3c3c"/><rect x="720" y="794" width="13" height="3" fill="#32e650"/>
<circle cx="526" cy="802" r="7.1" fill="#90e070"/><line x1="526" y1="802" x2="515.7" y2="805.8" stroke="#f0f0f0" stroke-width="2"/><rect x="519" y="789" width="14" height="3" fill="#3c3c3c"/><rect x="519" y="789" width="10" height="3" fill="#32e650"/>
<circle cx="617" cy="820" r="7.1" fill="#e050e0"/><line x1="617" y1="820" x2="628.0" y2="820.0" stroke="#f0f0f0" stroke-width="2"/><rect x="610" y="807" width="14" height="3" fill="#3c3c3c"/><rect x="610" y="807" width="3" height="3" fill="#e63c28"/>
<circle cx="683" cy="827" r="7.1" fill="#90e070"/><line x1="683" y1="827" x2="683.0" y2="816.0" stroke="#f0f0f0" stroke-width="2"/><rect x="676" y="814" width="14" height="3" fill="#3c3c3c"/><rect x="676" y="814" width="7" height="3" fill="#32e650"/>
<circle cx="736" cy="689" r="7.1" fill="#484878"/><line x1="736" y1="689" x2="736.0" y2="678.0" stroke="#f0f0f0" stroke-width="2"/><rect x="729" y="676" width="14" height="3" fill="#3c3c3c"/><rect x="729" y="676" width="6" height="3" fill="#32e650"/>
<circle cx="754" cy="681" r="7.1" fill="#b0d040"/><line x1="754" y1="681" x2="754.0" y2="670.0" stroke="#f0f0f0" stroke-width="2"/><rect x="747" y="668" width="14" height="3" fill="#3c3c3c"/><rect x="747" y="668" width="7" height="3" fill="#32e650"/>
<circle cx="809" cy="689" r="7.1" fill="#589898"/><line x1="809" y1="689" x2="816.8" y2="696.8" stroke="#f0f0f0" stroke-width="2"/><rect x="802" y="676" width="14" height="3" fill="#3c3c3c"/><rect x="802" y="676" width="7" height="3" fill="#32e650"/>
<circle cx="744" cy="794" r="7.1" fill="#a0c040"/><line x1="744" y1="794" x2="735.6" y2="801.1" stroke="#f0f0f0" stroke-width="2"/><rect x="737" y="781" width="14" height="3" fill="#3c3c3c"/><rect x="737" y="781" width="8" height="3" fill="#32e650"/>
<circle cx="749" cy="796" r="7.1" fill="#505068"/><line x1="749" y1="796" x2="741.9" y2="787.6" stroke="#f0f0f0" stroke-width="2"/><rect x="742" y="783" width="14" height="3" fill="#3c3c3c"/><rect x="742" y="783" width="8" height="3" fill="#32e650"/>
<circle cx="734" cy="818" r="7.1" fill="#70d8e8"/><line x1="734" y1="818" x2="745.0" y2="818.0" stroke="#f0f0f0" stroke-width="2"/><rect x="727" y="805" width="14" height="3" fill="#3c3c3c"/><rect x="727" y="805" width="8" height="3" fill="#32e650"/>
<circle cx="788" cy="814" r="7.1" fill="#70d0f0"/><line x1="788" y1="814" x2="795.1" y2="822.4" stroke="#f0f0f0" stroke-width="2"/><rect x="781" y="801" width="14" height="3" fill="#3c3c3c"/><rect x="781" y="801" width="13" height="3" fill="#32e650"/>
<circle cx="887" cy="803" r="7.1" fill="#90e8b0"/><line x1="887" y1="803" x2="888.9" y2="813.8" stroke="#f0f0f0" stroke-width="2"/><rect x="880" y="790" width="14" height="3" fill="#3c3c3c"/><rect x="880" y="790" width="7" height="3" fill="#32e650"/>
<circle cx="930" cy="781" r="7.1" fill="#4070e0"/><line x1="930" y1="781" x2="929.0" y2="792.0" stroke="#f0f0f0" stroke-width="2"/><rect x="923" y="768" width="14" height="3" fill="#3c3c3c"/><rect x="923" y="768" width="7" height="3" fill="#32e650"/>
<circle cx="921" cy="796" r="7.1" fill="#505840"/><line x1="921" y1="796" x2="918.2" y2="806.6" stroke="#f0f0f0" stroke-width="2"/><rect x="914" y="783" width="14" height="3" fill="#3c3c3c"/><rect x="914" y="783" width="13" height="3" fill="#32e650"/>
</g>
<rect x="977" y="28" width="2" height="793" fill="#46466e"/>
<rect x="987.5" y="396.5" width="274" height="74" fill="#0f0f20" stroke="#3c3c50" stroke-width="1"/>
<rect x="987.5" y="501.5" width="274" height="74" fill="#0f0f20" stroke="#3c3c50" stroke-width="1"/>
<rect x="987.5" y="606.5" width="274" height="74" fill="#0f0f20" stroke="#3c3c50" stroke-width="1"/>
<text x="1218" y="411" font-family="Liberation Mono" font-size="13" fill="#5aa0e0">200</text>
<text x="1217" y="516" font-family="Liberation Mono" font-size="13" fill="#e6c050">173</text>
<text x="1218" y="621" font-family="Liberation Mono" font-size="13" fill="#50e070">3</text>
<g shape-rendering="auto" fill="none" stroke-width="2">
<polyline points="987,454 1000,453 1020,452 1040,451 1060,449.5 1080,448 1095,446.5 1110,444 1125,439.5 1150,431.5 1165,423 1172,419.5 1207,402 1263,402" stroke="#5ab4ff"/>
<polyline points="987,564 1016,553 1047,542.7 1095,531 1120,531 1132,530 1149,528.6 1160,530 1175,532 1187,531.5 1208,530 1263,507" stroke="#f5c842"/>
<polyline points="987,652 1001,651.5 1016,650.8 1040,648 1060,645.7 1093,641.6 1123,634.5 1150,629.6 1177,619.4 1206.5,613 1249,613 1249,612 1263,612" stroke="#50f070"/>
</g>
</svg>
<div id="tb"><div class="t">Evolution Simulator</div>
<svg width="1272" height="28" style="position:absolute;left:0;top:0">
<g>
<ellipse cx="13.5" cy="10" rx="6.3" ry="5.3" fill="#f5c842" stroke="#c89a30" stroke-width="0.7"/>
<ellipse cx="11.3" cy="8" rx="1.9" ry="2.6" fill="#fafafa" stroke="#b08838" stroke-width="0.5"/>
<ellipse cx="16.6" cy="8.2" rx="1.9" ry="2.6" fill="#fafafa" stroke="#b08838" stroke-width="0.5"/>
<ellipse cx="12.5" cy="18.3" rx="4.2" ry="1.9" fill="#f0c040" stroke="#a08040" stroke-width="0.5"/>
<ellipse cx="9" cy="15" rx="2.8" ry="2.2" fill="#d0d0e0"/>
<circle cx="9" cy="15" r="0.9" fill="#305030"/>
<ellipse cx="12.5" cy="15.5" rx="2" ry="1.6" fill="#c0c0d0"/>
<ellipse cx="16.5" cy="16" rx="2.4" ry="2" fill="#6a6070"/>
</g>
<g stroke-linecap="round">
<line x1="28.3" y1="16.3" x2="36.7" y2="9" stroke="#55607a" stroke-width="3.2"/>
<line x1="29" y1="16.5" x2="31" y2="14" stroke="#20a0d0" stroke-width="1.2"/>
<line x1="33" y1="12.5" x2="35.5" y2="10" stroke="#a0a8c0" stroke-width="1.2"/>
<circle cx="34.5" cy="8.5" r="0.8" fill="#e0b030"/>
<circle cx="29.5" cy="14" r="0.8" fill="#e0b030"/>
</g>
<line x1="1158" y1="12.5" x2="1168" y2="12.5" stroke="#000" stroke-width="1"/>
<rect x="1203.5" y="7.5" width="9" height="9" fill="none" stroke="#c0c0c0" stroke-width="1"/>
<path d="M1249 7 L1259 17 M1259 7 L1249 17" stroke="#000" stroke-width="1.1"/>
</svg></div>
<div class="p" style="left:988px;top:37px;font-size:19px;letter-spacing:-0.5px;font-weight:bold;color:#96b4ff;">EVOLUTION SIMULATOR</div>
<div class="p" style="left:987px;top:68px;font-size:13.33px;line-height:22px;color:#c8c8c8;">Tick:         333
Population:   200
Food:         68
Max Gen:      6
Total Born:   203
Total Died:   3</div>
<div class="p" style="left:987px;top:204px;font-size:13.33px;line-height:22px;color:#c8c8c8;">Avg Age:      176
Max Age:      333
Avg Energy:   87.6
Avg Gen:      2.7</div>
<div class="p" style="left:987px;top:298px;font-size:13.33px;line-height:22px;color:#f0c850;">Speed: NORMAL</div>
<div class="p" style="left:987px;top:320px;font-size:13.33px;line-height:22px;color:#8c8c8c;">[SPACE] toggle speed
[ESC]   quit</div>
<div class="p" style="left:987px;top:376px;font-size:13.33px;line-height:22px;color:#5aa0e0;">Population</div>
<div class="p" style="left:987px;top:481px;font-size:13.33px;line-height:22px;color:#e6c050;">Avg Age</div>
<div class="p" style="left:987px;top:586px;font-size:13.33px;line-height:22px;color:#50e070;">Avg Generation</div>
</body></html>
